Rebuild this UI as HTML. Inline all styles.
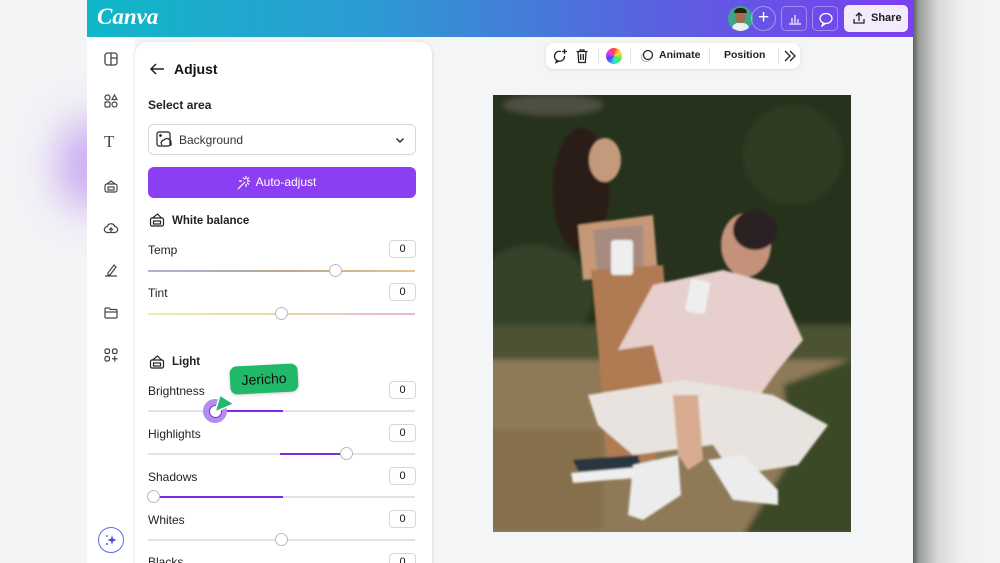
<!DOCTYPE html>
<html style="width:1000px;height:563px;overflow:hidden"><head><meta charset="utf-8"><style>
*{box-sizing:border-box;margin:0;padding:0}
body{width:1000px;height:563px;overflow:hidden;background:#f3f4f6;font-family:"Liberation Sans",sans-serif;position:relative;color:#0e1318}
.glow{position:absolute;left:60px;top:120px;width:60px;height:90px;border-radius:50%;background:#b07af0;filter:blur(22px);opacity:.7}
.rshadow{position:absolute;left:913px;top:0;width:87px;height:563px;background:linear-gradient(90deg,#5d625e 0,#9a9d9a 6px,#d8dad9 25px,#f0f1f1 50px,#f3f4f6 87px)}
.app{position:absolute;left:87px;top:0;width:826px;height:563px;background:#f4f5f7;overflow:hidden}
.hdr{position:absolute;left:0;top:0;width:826px;height:37px;background:linear-gradient(90deg,#10b7c8 0%,#2d9ad3 35%,#5b5fe0 70%,#7b3ff0 100%)}
.logo{position:absolute;left:10px;top:4px;color:#fff;font-family:"Liberation Serif",serif;font-style:italic;font-size:23px;font-weight:bold}
.side{position:absolute;left:0;top:37px;width:48px;height:526px;background:#fff}
.ic{position:absolute;left:16px;width:16px;height:16px}
.panel{position:absolute;left:135px;top:42px;width:297px;height:540px;background:#fff;border-radius:12px;box-shadow:0 1px 4px rgba(0,0,0,.15)}
.clip{position:absolute;left:0;top:0;width:1000px;height:563px;overflow:hidden}
.p{position:absolute;font-size:12px}
.lbl{position:absolute;left:13px;font-size:12px;color:#222}
.val{position:absolute;left:254px;width:27px;height:18px;border:1px solid #d5d7db;border-radius:4px;font-size:11px;text-align:center;line-height:16px}
.track{position:absolute;left:13px;width:267px;height:2px;background:#e1e3e6}
.knob{position:absolute;width:13px;height:13px;border-radius:50%;background:#fff;border:1px solid #b7b9bd}
.pur{position:absolute;height:2px;background:#7d2ae8}
.btn{position:absolute;top:6px;height:25px;border:1px solid rgba(255,255,255,.35);border-radius:5px}
</style></head><body>
<div class="clip">
<div class="glow"></div>
<div class="rshadow"></div>
<div class="app">
 <div class="hdr">
  <div class="logo">Canva</div>
  <div style="position:absolute;left:641px;top:6px;width:25px;height:25px;border-radius:50%;background:#3aa58a;overflow:hidden"><div style="position:absolute;left:7px;top:4px;width:11px;height:13px;border-radius:50%;background:#a46d4a"></div><div style="position:absolute;left:6px;top:2px;width:13px;height:5px;border-radius:5px 5px 0 0;background:#2b1c14"></div><div style="position:absolute;left:4px;top:17px;width:17px;height:10px;background:#eee;border-radius:6px 6px 0 0"></div></div>
  <div style="position:absolute;left:664px;top:6px;width:25px;height:25px;border-radius:50%;border:1px solid rgba(255,255,255,.4);color:#fff;font-size:19px;line-height:21px;text-align:center">+</div>
  <div class="btn" style="left:694px;width:26px"><svg width="26" height="25" viewBox="0 0 26 25"><path d="M7 17h12M10 16v-5M13 16V8M16 16v-4" stroke="#fff" stroke-width="1.2" fill="none"/></svg></div>
  <div class="btn" style="left:725px;width:26px"><svg width="26" height="25" viewBox="0 0 26 25"><ellipse cx="13" cy="11.5" rx="6" ry="5" stroke="#fff" stroke-width="1.3" fill="none"/><path d="M10 16l-1 3 3-2" stroke="#fff" stroke-width="1.2" fill="none"/></svg></div>
  <div style="position:absolute;left:757px;top:5px;width:64px;height:27px;border-radius:5px;background:#f3ebfd;font-size:11px;font-weight:bold;line-height:27px;padding-left:27px;color:#1a1a1a">Share<svg style="position:absolute;left:8px;top:6px" width="14" height="14" viewBox="0 0 14 14"><path d="M2 8v4h10V8M7 10V2M4 5l3-3 3 3" stroke="#222" stroke-width="1.3" fill="none"/></svg></div>
 </div>
 <div class="side">
  <svg class="ic" style="top:14px" viewBox="0 0 16 16"><rect x="2" y="2" width="12" height="12" rx="2.5" stroke="#444" stroke-width="1.3" fill="none"/><path d="M8 2v12M8 7h6" stroke="#444" stroke-width="1.3"/></svg>
  <svg class="ic" style="top:56px" viewBox="0 0 16 16"><g stroke="#444" stroke-width="1.2" fill="none"><circle cx="4.5" cy="4.5" r="2.5"/><path d="M11.5 2l2.5 4.5h-5z"/><rect x="2" y="9" width="5" height="5" rx="1"/><circle cx="11.5" cy="11.5" r="2.5"/></g></svg>
  <div style="position:absolute;left:17px;top:95px;font-family:'Liberation Serif',serif;font-size:17px;color:#444">T</div>
  <svg class="ic" style="top:141px" viewBox="0 0 16 16"><g stroke="#444" stroke-width="1.2" fill="none"><rect x="2" y="6" width="12" height="8" rx="2"/><path d="M4 6l4-3 4 3"/><rect x="5" y="9" width="6" height="3"/></g></svg>
  <svg class="ic" style="top:183px" viewBox="0 0 16 16"><g stroke="#444" stroke-width="1.2" fill="none"><path d="M4.5 12.5a3 3 0 0 1-.3-6 4 4 0 0 1 7.6 0 3 3 0 0 1-.3 6z"/><path d="M8 13V8M6 10l2-2 2 2"/></g></svg>
  <svg class="ic" style="top:225px" viewBox="0 0 16 16"><g stroke="#444" stroke-width="1.2" fill="none"><path d="M5 11l6-8 2 2-6 8H5z"/><path d="M2 14h12"/></g></svg>
  <svg class="ic" style="top:268px" viewBox="0 0 16 16"><g stroke="#444" stroke-width="1.2" fill="none"><path d="M2 4a1 1 0 0 1 1-1h3l1.5 1.5H13a1 1 0 0 1 1 1V12a1 1 0 0 1-1 1H3a1 1 0 0 1-1-1z"/><path d="M2 7h12"/></g></svg>
  <svg class="ic" style="top:310px" viewBox="0 0 16 16"><g stroke="#444" stroke-width="1.2" fill="none"><rect x="2" y="2" width="4.5" height="4.5" rx="1.5"/><rect x="9.5" y="2" width="4.5" height="4.5" rx="1.5"/><rect x="2" y="9.5" width="4.5" height="4.5" rx="1.5"/><path d="M11.75 9v5.5M9 11.75h5.5"/></g></svg>
  <div style="position:absolute;left:11px;top:490px;width:26px;height:26px;border-radius:50%;border:1.5px solid #5b6ee8;background:#fff"><svg style="position:absolute;left:5px;top:5px" width="14" height="14" viewBox="0 0 14 14"><path d="M8 2l1 3.5L12.5 7 9 8.5 8 12 7 8.5 3.5 7 7 5.5z" fill="#4b4fd8"/><circle cx="3" cy="3" r="1" fill="#3aa0e0"/><circle cx="3" cy="11" r="1" fill="#7a3fe0"/></svg></div>
 </div>
 <div style="position:absolute;left:459px;top:43px;width:254px;height:26px;background:#fff;border-radius:8px;box-shadow:0 1px 4px rgba(0,0,0,.1)">
  <svg style="position:absolute;left:6px;top:5px" width="16" height="16" viewBox="0 0 16 16"><g stroke="#222" stroke-width="1.3" fill="none"><path d="M9 3.5a5 5 0 1 0 3.5 4.5"/><path d="M5 12l-1 2.5 3-1.5M12.5 1v5M10 3.5h5"/></g></svg>
  <svg style="position:absolute;left:29px;top:5px" width="14" height="16" viewBox="0 0 14 16"><g stroke="#222" stroke-width="1.3" fill="none"><path d="M1.5 3.5h11M5 3.5V2h4v1.5M3 3.5l.7 11h6.6l.7-11M5.7 6v6M8.3 6v6"/></g></svg>
  <div style="position:absolute;left:52px;top:5px;width:1px;height:16px;background:#e3e3e3"></div>
  <div style="position:absolute;left:60px;top:5px;width:16px;height:16px;border-radius:50%;background:conic-gradient(#f44,#fd3,#4e4,#3dd,#44f,#e3e,#f44)"></div>
  <div style="position:absolute;left:84px;top:5px;width:1px;height:16px;background:#e3e3e3"></div>
  <svg style="position:absolute;left:93px;top:5px" width="16" height="16" viewBox="0 0 16 16"><g fill="none" stroke-width="1.2"><circle cx="7" cy="9" r="4.5" stroke="#bbb"/><circle cx="9" cy="7" r="4.5" stroke="#222" fill="#fff"/></g></svg>
  <div class="p" style="left:113px;top:6px;font-size:10.5px;font-weight:bold;color:#222">Animate</div>
  <div style="position:absolute;left:163px;top:5px;width:1px;height:16px;background:#e3e3e3"></div>
  <div class="p" style="left:178px;top:6px;font-size:10.5px;font-weight:bold;color:#222">Position</div>
  <div style="position:absolute;left:232px;top:5px;width:1px;height:16px;background:#e3e3e3"></div>
  <svg style="position:absolute;left:237px;top:6px" width="14" height="14" viewBox="0 0 14 14"><path d="M2 2l5 5-5 5M7 2l5 5-5 5" stroke="#222" stroke-width="1.3" fill="none"/></svg>
 </div>
</div>

<svg style="position:absolute;left:493px;top:95px" width="358" height="437" viewBox="0 0 358 437">
<defs><filter id="b" x="-20%" y="-20%" width="140%" height="140%"><feGaussianBlur stdDeviation="3"/></filter><filter id="b2"><feGaussianBlur stdDeviation="1"/></filter></defs>
<rect width="358" height="437" fill="#8a7655"/>
<g filter="url(#b)">
<rect x="-10" y="-10" width="380" height="260" fill="#27301f"/>
<ellipse cx="60" cy="10" rx="50" ry="10" fill="#4e5040"/>
<ellipse cx="300" cy="60" rx="50" ry="50" fill="#2f3a24"/>
<ellipse cx="40" cy="200" rx="60" ry="50" fill="#34422a"/>
<rect x="-10" y="230" width="380" height="40" fill="#4b5233"/>
<rect x="-10" y="265" width="380" height="180" fill="#8f7a58"/>
<polygon points="290,290 370,260 370,440 250,440 300,360" fill="#3b4a28"/>
<rect x="-10" y="335" width="120" height="100" fill="#866f4c"/>
</g>
<g filter="url(#b2)">
<ellipse cx="88" cy="95" rx="28" ry="62" fill="#2a1e18"/>
<ellipse cx="112" cy="65" rx="16" ry="22" fill="#c49a7c"/>
<path d="M85 130 L160 120 L165 180 L90 185Z" fill="#c69878"/>
<path d="M100 135 L150 130 L150 180 L105 182Z" fill="#a78a80"/>
<path d="M98 175 L170 170 L175 230 L160 385 L115 385 L105 250Z" fill="#b07a53"/>
<rect x="118" y="145" width="22" height="35" fill="#eee" rx="3"/>
<ellipse cx="253" cy="150" rx="25" ry="32" fill="#c4917a"/>
<ellipse cx="262" cy="135" rx="22" ry="20" fill="#2b2420"/>
<path d="M160 190 L230 175 L285 190 L310 245 L285 275 L260 310 L175 310 L160 250 L125 255Z" fill="#e6cfcc"/>
<path d="M95 300 L190 285 L280 300 L335 330 L305 370 L240 380 L220 350 L140 360 L105 330Z" fill="#e8e3de"/>
<path d="M80 365 L145 360 L150 380 L90 385Z" fill="#2c3443"/>
<path d="M78 378 L148 372 L150 382 L80 388Z" fill="#efefef"/>
<path d="M140 370 L185 360 L188 400 L150 425 L135 420Z" fill="#ececec"/>
<path d="M215 365 L250 360 L285 395 L285 410 L240 405Z" fill="#ececec"/>
<rect x="195" y="185" width="20" height="33" fill="#eee" rx="3" transform="rotate(10 205 200)"/>
<path d="M180 300 L205 300 L210 365 L195 375 L185 360Z" fill="#d9ab90"/>
</g>
</svg>

<div class="panel">
 <svg style="position:absolute;left:14px;top:20px" width="16" height="14" viewBox="0 0 16 14"><path d="M15 7H2M7 2L2 7l5 5" stroke="#222" stroke-width="1.5" fill="none"/></svg>
 <div class="p" style="left:39px;top:19px;font-size:14px;font-weight:bold">Adjust</div>
 <div class="p" style="left:13px;top:56px;font-size:12px;font-weight:bold;color:#222">Select area</div>
 <div style="position:absolute;left:13px;top:82px;width:268px;height:31px;border:1px solid #d5d7db;border-radius:6px">
  <svg style="position:absolute;left:7px;top:6px" width="16" height="17" viewBox="0 0 16 17"><g stroke="#222" stroke-width="1.2" fill="none"><rect x="1" y="1" width="13" height="14" rx="2"/><circle cx="4.5" cy="4.5" r=".8" fill="#222"/><path d="M6 14a3 3 0 0 1 2-5 4 4 0 0 1 7 2v4"/></g></svg>
  <div class="p" style="left:30px;top:8px;font-size:12px;color:#333">Background</div>
  <svg style="position:absolute;left:246px;top:10px" width="10" height="10" viewBox="0 0 10 10"><path d="M1.5 3.5L5 7l3.5-3.5" stroke="#222" stroke-width="1.4" fill="none"/></svg>
 </div>
 <div style="position:absolute;left:13px;top:125px;width:268px;height:31px;border-radius:6px;background:#8b3ef2;color:#fff;font-size:12px;line-height:31px;text-align:center;padding-left:8px">Auto-adjust
  <svg style="position:absolute;left:89px;top:8px" width="15" height="15" viewBox="0 0 15 15"><g stroke="#fff" stroke-width="1.2"><path d="M1 14l7-7M9 1v3M9 9v3M13 6h-3M5 6H2M12 2.5l-2 2M12 9.5l-2-2M6 2.5l2 2"/></g></svg>
 </div>
 <svg style="position:absolute;left:14px;top:170px" width="16" height="16" viewBox="0 0 16 16"><g stroke="#222" stroke-width="1.2" fill="none"><rect x="1.5" y="6" width="13" height="8" rx="1.5"/><path d="M3.5 6l5-4 4 4"/><rect x="4.5" y="9" width="7" height="3"/></g></svg>
 <div class="p" style="left:37px;top:173px;font-size:11.5px;font-weight:bold;color:#222">White balance</div>
 <div class="lbl" style="top:201px">Temp</div><div class="val" style="top:198px">0</div>
 <div class="track" style="top:228px;background:linear-gradient(90deg,#a8b2e0,#b7a88f,#e5c495)"></div><div class="knob" style="left:194px;top:222px"></div>
 <div class="lbl" style="top:244px">Tint</div><div class="val" style="top:241px">0</div>
 <div class="track" style="top:271px;background:linear-gradient(90deg,#eeeab0,#e8d8a8,#e8b5df)"></div><div class="knob" style="left:140px;top:265px"></div>
 <svg style="position:absolute;left:14px;top:312px" width="16" height="16" viewBox="0 0 16 16"><g stroke="#222" stroke-width="1.2" fill="none"><rect x="1.5" y="6" width="13" height="8" rx="1.5"/><path d="M3.5 6l5-4 4 4"/><rect x="4.5" y="9" width="7" height="3"/></g></svg>
 <div class="p" style="left:37px;top:314px;font-size:11.5px;font-weight:bold;color:#222">Light</div>
 <div class="lbl" style="top:342px">Brightness</div><div class="val" style="top:339px">0</div>
 <div class="track" style="top:368px"></div><div class="pur" style="left:83px;width:65px;top:368px"></div>
 <div style="position:absolute;left:68px;top:357px;width:24px;height:24px;border-radius:50%;background:#b58cf0"></div><div class="knob" style="left:74px;top:363px;border-color:#7d2ae8"></div>
 <div class="lbl" style="top:385px">Highlights</div><div class="val" style="top:382px">0</div>
 <div class="track" style="top:411px"></div><div class="pur" style="left:145px;width:65px;top:411px"></div><div class="knob" style="left:205px;top:405px"></div>
 <div class="lbl" style="top:428px">Shadows</div><div class="val" style="top:425px">0</div>
 <div class="track" style="top:454px"></div><div class="pur" style="left:18px;width:130px;top:454px"></div><div class="knob" style="left:12px;top:448px"></div>
 <div class="lbl" style="top:471px">Whites</div><div class="val" style="top:468px">0</div>
 <div class="track" style="top:497px"></div><div class="knob" style="left:140px;top:491px"></div>
 <div class="lbl" style="top:513px">Blacks</div><div class="val" style="top:511px">0</div>
</div>
<svg style="position:absolute;left:212px;top:392px" width="24" height="22" viewBox="0 0 24 22"><path d="M3 20L8 3l14 9z" fill="#21b86a" stroke="#fff" stroke-width="1.5"/></svg>
<div style="position:absolute;left:230px;top:365px;width:68px;height:28px;border-radius:7px;background:#21b86a;color:#111;font-size:14px;line-height:28px;text-align:center;transform:rotate(-3deg);box-shadow:0 1px 3px rgba(0,0,0,.2)">Jericho</div>
</div>
</body></html>
